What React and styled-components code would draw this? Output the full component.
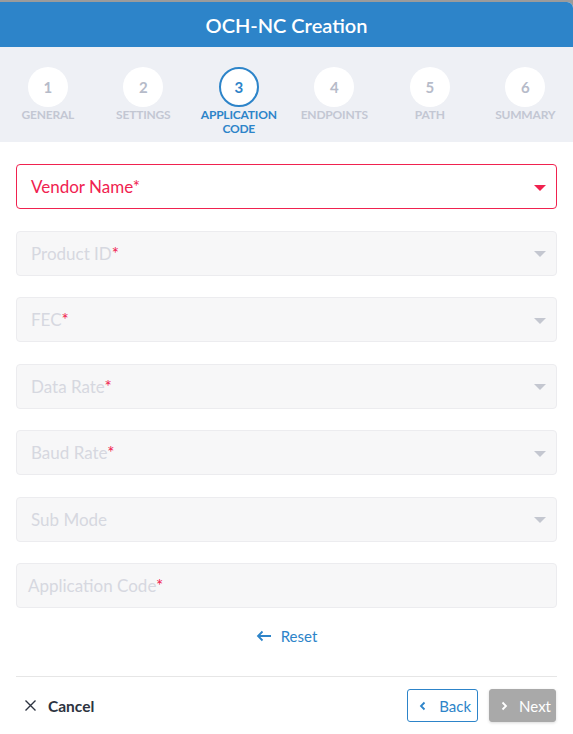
import React from 'react';
import styled, { createGlobalStyle } from 'styled-components';

const GlobalStyle = createGlobalStyle`
  html, body {
    margin: 0;
    padding: 0;
    background: #9b9b9b;
    font-family: Lato, "Liberation Sans", sans-serif;
  }
`;

const Modal = styled.div`
  margin-top: 2px;
  width: 573px;
  height: 732px;
  background: #fff;
  border-top-right-radius: 6px;
  overflow: hidden;
  display: flex;
  flex-direction: column;
`;

const Header = styled.div`
  height: 45px;
  background: #2d84c9;
  color: #fff;
  display: flex;
  align-items: center;
  justify-content: center;
  font-size: 20px;
  font-weight: 600;
`;

const Stepper = styled.div`
  height: 95px;
  background: #eef0f5;
  display: grid;
  grid-template-columns: repeat(6, 1fr);
  padding-top: 20px;
  box-sizing: border-box;
`;

const Step = styled.div`
  display: flex;
  flex-direction: column;
  align-items: center;
`;

const Circle = styled.div`
  width: 40px;
  height: 40px;
  border-radius: 50%;
  background: #fff;
  box-sizing: border-box;
  border: ${p => (p.$active ? '2px solid #2d84c9' : 'none')};
  color: ${p => (p.$active ? '#2d84c9' : '#b6bbc9')};
  display: flex;
  align-items: center;
  justify-content: center;
  font-size: 15px;
  font-weight: 700;
`;

const StepLabel = styled.div`
  margin-top: 1px;
  font-size: 12px;
  font-weight: 700;
  line-height: 14px;
  text-align: center;
  letter-spacing: -0.2px;
  color: ${p => (p.$active ? '#2d84c9' : '#c3c7d3')};
`;

const Form = styled.div`
  padding: 22px 16px 0;
  display: flex;
  flex-direction: column;
  gap: 21.5px;
`;

const Field = styled.div`
  height: 45px;
  box-sizing: border-box;
  border-radius: 4px;
  border: 1px solid ${p => (p.$error ? '#f0224f' : '#ececef')};
  background: ${p => (p.$error ? '#fff' : '#f7f7f8')};
  display: flex;
  align-items: center;
  justify-content: space-between;
  padding: 0 10px 0 ${p => (p.$input ? '11px' : '14px')};
`;

const Placeholder = styled.span`
  font-size: 17px;
  color: ${p => (p.$error ? '#f0224f' : '#d6d8e0')};
`;

const Star = styled.span`
  color: #f0224f;
`;

const Caret = styled.span`
  width: 0;
  height: 0;
  border-left: 6px solid transparent;
  border-right: 6px solid transparent;
  border-top: 6px solid ${p => (p.$error ? '#f0224f' : '#c4c7d0')};
  margin-top: 2px;
`;

const ResetRow = styled.div`
  display: flex;
  justify-content: center;
  align-items: center;
  gap: 9px;
  height: 34px;
  margin-top: 11px;
  color: #2d84c9;
  font-size: 15px;
`;

const Divider = styled.div`
  margin: 23px 16px 0;
  height: 1px;
  background: #e6e6e6;
`;

const Footer = styled.div`
  display: flex;
  align-items: center;
  justify-content: space-between;
  padding: 12px 17px 0 25px;
`;

const CancelBtn = styled.div`
  display: flex;
  align-items: center;
  gap: 12px;
  font-size: 15.5px;
  font-weight: 700;
  color: #2d3340;
`;

const Buttons = styled.div`
  display: flex;
  gap: 11px;
`;

const Btn = styled.div`
  height: 33px;
  box-sizing: border-box;
  border-radius: 3px;
  display: flex;
  align-items: center;
  gap: ${p => (p.$primary ? '10px' : '11px')};
  font-size: 15px;
  padding: ${p => (p.$primary ? '0 4px 0 9px' : '0 6px 0 10px')};
  border: 1px solid ${p => (p.$primary ? '#a9a9a9' : '#2d84c9')};
  background: ${p => (p.$primary ? '#a9a9a9' : '#fff')};
  color: ${p => (p.$primary ? '#fff' : '#2d84c9')};
  box-shadow: ${p => (p.$primary ? '0 1px 3px rgba(0,0,0,0.15)' : 'none')};
`;

const steps = ['GENERAL', 'SETTINGS', 'APPLICATION CODE', 'ENDPOINTS', 'PATH', 'SUMMARY'];

const fields = [
  { label: 'Vendor Name', req: true, error: true },
  { label: 'Product ID', req: true },
  { label: 'FEC', req: true },
  { label: 'Data Rate', req: true },
  { label: 'Baud Rate', req: true },
  { label: 'Sub Mode' },
  { label: 'Application Code', req: true, input: true },
];

const Chevron = ({ dir, color }) => (
  <svg width="10" height="10" viewBox="0 0 10 10" fill="none">
    <path
      d={dir === 'left' ? 'M6.5 1.5L3 5l3.5 3.5' : 'M3.5 1.5L7 5 3.5 8.5'}
      stroke={color}
      strokeWidth="1.8"
    />
  </svg>
);

export default function App() {
  return (
    <>
      <GlobalStyle />
      <Modal>
        <Header>OCH-NC Creation</Header>
        <Stepper>
          {steps.map((s, i) => (
            <Step key={s}>
              <Circle $active={i === 2}>{i + 1}</Circle>
              <StepLabel $active={i === 2}>
                {s === 'APPLICATION CODE' ? (
                  <>
                    APPLICATION
                    <br />
                    CODE
                  </>
                ) : (
                  s
                )}
              </StepLabel>
            </Step>
          ))}
        </Stepper>
        <Form>
          {fields.map(f => (
            <Field key={f.label} $error={f.error} $input={f.input}>
              <Placeholder $error={f.error}>
                {f.label}
                {f.req && <Star>*</Star>}
              </Placeholder>
              {!f.input && <Caret $error={f.error} />}
            </Field>
          ))}
        </Form>
        <ResetRow>
          <svg width="16" height="12" viewBox="0 0 16 12" fill="none">
            <path d="M15 6H2M6.5 1.5L2 6l4.5 4.5" stroke="#2d84c9" strokeWidth="1.8" />
          </svg>
          Reset
        </ResetRow>
        <Divider />
        <Footer>
          <CancelBtn>
            <svg width="11" height="11" viewBox="0 0 11 11" fill="none">
              <path d="M0.5 0.5l10 10M10.5 0.5l-10 10" stroke="#2d3340" strokeWidth="1.4" />
            </svg>
            Cancel
          </CancelBtn>
          <Buttons>
            <Btn>
              <Chevron dir="left" color="#2d84c9" />
              Back
            </Btn>
            <Btn $primary>
              <Chevron dir="right" color="#fff" />
              Next
            </Btn>
          </Buttons>
        </Footer>
      </Modal>
    </>
  );
}
